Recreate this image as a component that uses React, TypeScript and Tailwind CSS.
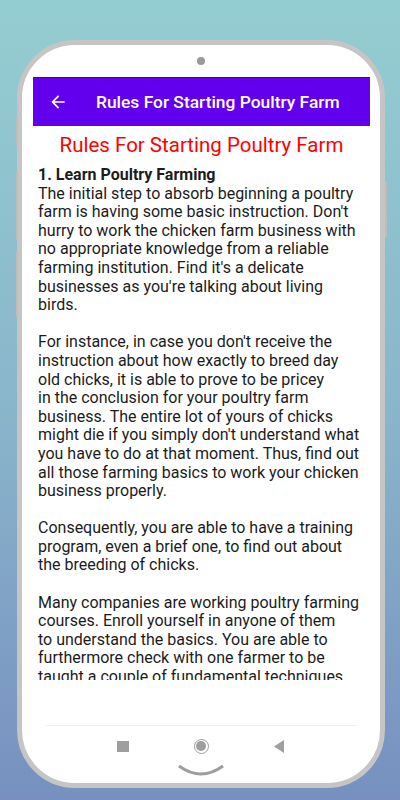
import React from 'react';

const paragraphs: string[][] = [
  [
    'The initial step to absorb beginning a poultry',
    "farm is having some basic instruction. Don't",
    'hurry to work the chicken farm business with',
    'no appropriate knowledge from a reliable',
    "farming institution. Find it's a delicate",
    "businesses as you're talking about living",
    'birds.',
  ],
  [
    "For instance, in case you don't receive the",
    'instruction about how exactly to breed day',
    'old chicks, it is able to prove to be pricey',
    'in the conclusion for your poultry farm',
    'business. The entire lot of yours of chicks',
    "might die if you simply don't understand what",
    'you have to do at that moment. Thus, find out',
    'all those farming basics to work your chicken',
    'business properly.',
  ],
  [
    'Consequently, you are able to have a training',
    'program, even a brief one, to find out about',
    'the breeding of chicks.',
  ],
  [
    'Many companies are working poultry farming',
    'courses. Enroll yourself in anyone of them',
    'to understand the basics. You are able to',
    'furthermore check with one farmer to be',
    'taught a couple of fundamental techniques',
  ],
];

export default function App() {
  return (
    <div
      className="w-[400px] h-[800px] overflow-hidden flex justify-start pt-[40px] pl-[17px] bg-gradient-to-b from-[#94cdd1] via-[#8ab6cb] to-[#7790c0]"
      style={{ fontFamily: 'Roboto, "Noto Sans", sans-serif' }}
    >
      <div className="relative w-[368px] h-[748px] rounded-[58px] border-[5px] border-[#c5c5c5] bg-white flex flex-col items-center">
        {/* side buttons */}
        <div className="absolute left-[-6px] top-[72px] w-[2px] h-[28px] bg-[#bdbdbd]" />
        <div className="absolute left-[-6px] top-[127px] w-[2px] h-[68px] bg-[#bdbdbd]" />
        <div className="absolute left-[-6px] top-[207px] w-[2px] h-[65px] bg-[#bdbdbd]" />
        <div className="absolute right-[-7px] top-[137px] w-[2px] h-[55px] bg-[#bdbdbd]" />

        <div className="mt-[12px] w-[8px] h-[8px] rounded-full bg-[#9a9a9a]" />

        <div className="mt-[12px] self-start ml-[11px] w-[337px] flex flex-col">
          <div className="h-[49px] bg-[#6200ee] border-t border-[#3f00b5] flex items-center pl-[15px]">
            <svg width="20" height="20" viewBox="0 0 24 24" fill="#ffffff">
              <path d="M20 11H7.83l5.59-5.59L12 4l-8 8 8 8 1.41-1.41L7.83 13H20v-2z" />
            </svg>
            <span className="ml-[28px] text-white text-[17.4px] font-medium">
              Rules For Starting Poultry Farm
            </span>
          </div>

          <div className="h-[554px] overflow-hidden">
            <h1 className="mt-[7px] text-center text-[20.5px] leading-[24px] text-[#ff0000]">
              Rules For Starting Poultry Farm
            </h1>
            <div className="mt-[9px] pl-[5px] text-[16px] leading-[18.6px] text-[#1c1c1c] whitespace-nowrap">
              <p className="font-bold">1. Learn Poultry Farming</p>
              {paragraphs.map((lines, i) => (
                <p key={i} className={i > 0 ? 'mt-[18.6px]' : ''}>
                  {lines.map((l, j) => (
                    <React.Fragment key={j}>
                      {l}
                      {j < lines.length - 1 && <br />}
                    </React.Fragment>
                  ))}
                </p>
              ))}
            </div>
          </div>
        </div>

        <div className="mt-[45px] w-[310px] h-px bg-[#efefef]" />

        <div className="h-[40px] grid grid-cols-[78px_78px_78px] items-center justify-items-center">
          <div className="w-[12px] h-[11px] bg-[#9e9e9e]" />
          <div className="w-[15px] h-[15px] rounded-full border-[1.5px] border-[#9e9e9e] flex items-center justify-center">
            <div className="w-[10px] h-[10px] rounded-full bg-[#9e9e9e]" />
          </div>
          <svg width="11" height="13" viewBox="0 0 11 13">
            <polygon points="10,0 10,13 0,6.5" fill="#9e9e9e" />
          </svg>
        </div>

        <svg width="48" height="12" viewBox="0 0 48 12" className="-mt-[2px]">
          <path d="M2 2 Q24 18 46 2" fill="none" stroke="#9e9e9e" strokeWidth="3" />
        </svg>
      </div>
    </div>
  );
}
